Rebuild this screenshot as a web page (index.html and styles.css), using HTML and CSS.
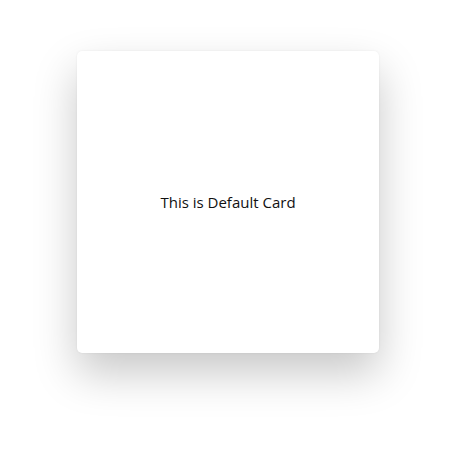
FILE: index.html
```html
<!DOCTYPE html>
<html>
<head>
<meta charset="utf-8">
<link rel="stylesheet" href="styles.css">
</head>
<body>
<div class="page">
  <div class="card">
    <p class="card-text">This is Default Card</p>
  </div>
</div>
</body>
</html>
```

FILE: styles.css
```css
html, body {
  margin: 0;
  padding: 0;
  background: #ffffff;
}
.page {
  box-sizing: border-box;
  min-height: 467px;
  padding: 51px 0 0 77px;
}
.card {
  width: 302px;
  height: 302px;
  box-sizing: border-box;
  background: #ffffff;
  border-radius: 5px;
  box-shadow: 0 0 2px rgba(0, 0, 0, 0.08), 0 20px 44px rgba(0, 0, 0, 0.22);
  display: flex;
  align-items: center;
  justify-content: center;
}
.card-text {
  margin: 0;
  font-family: "Open Sans", "Noto Sans", sans-serif;
  font-size: 15px;
  color: #111111;
}
```
